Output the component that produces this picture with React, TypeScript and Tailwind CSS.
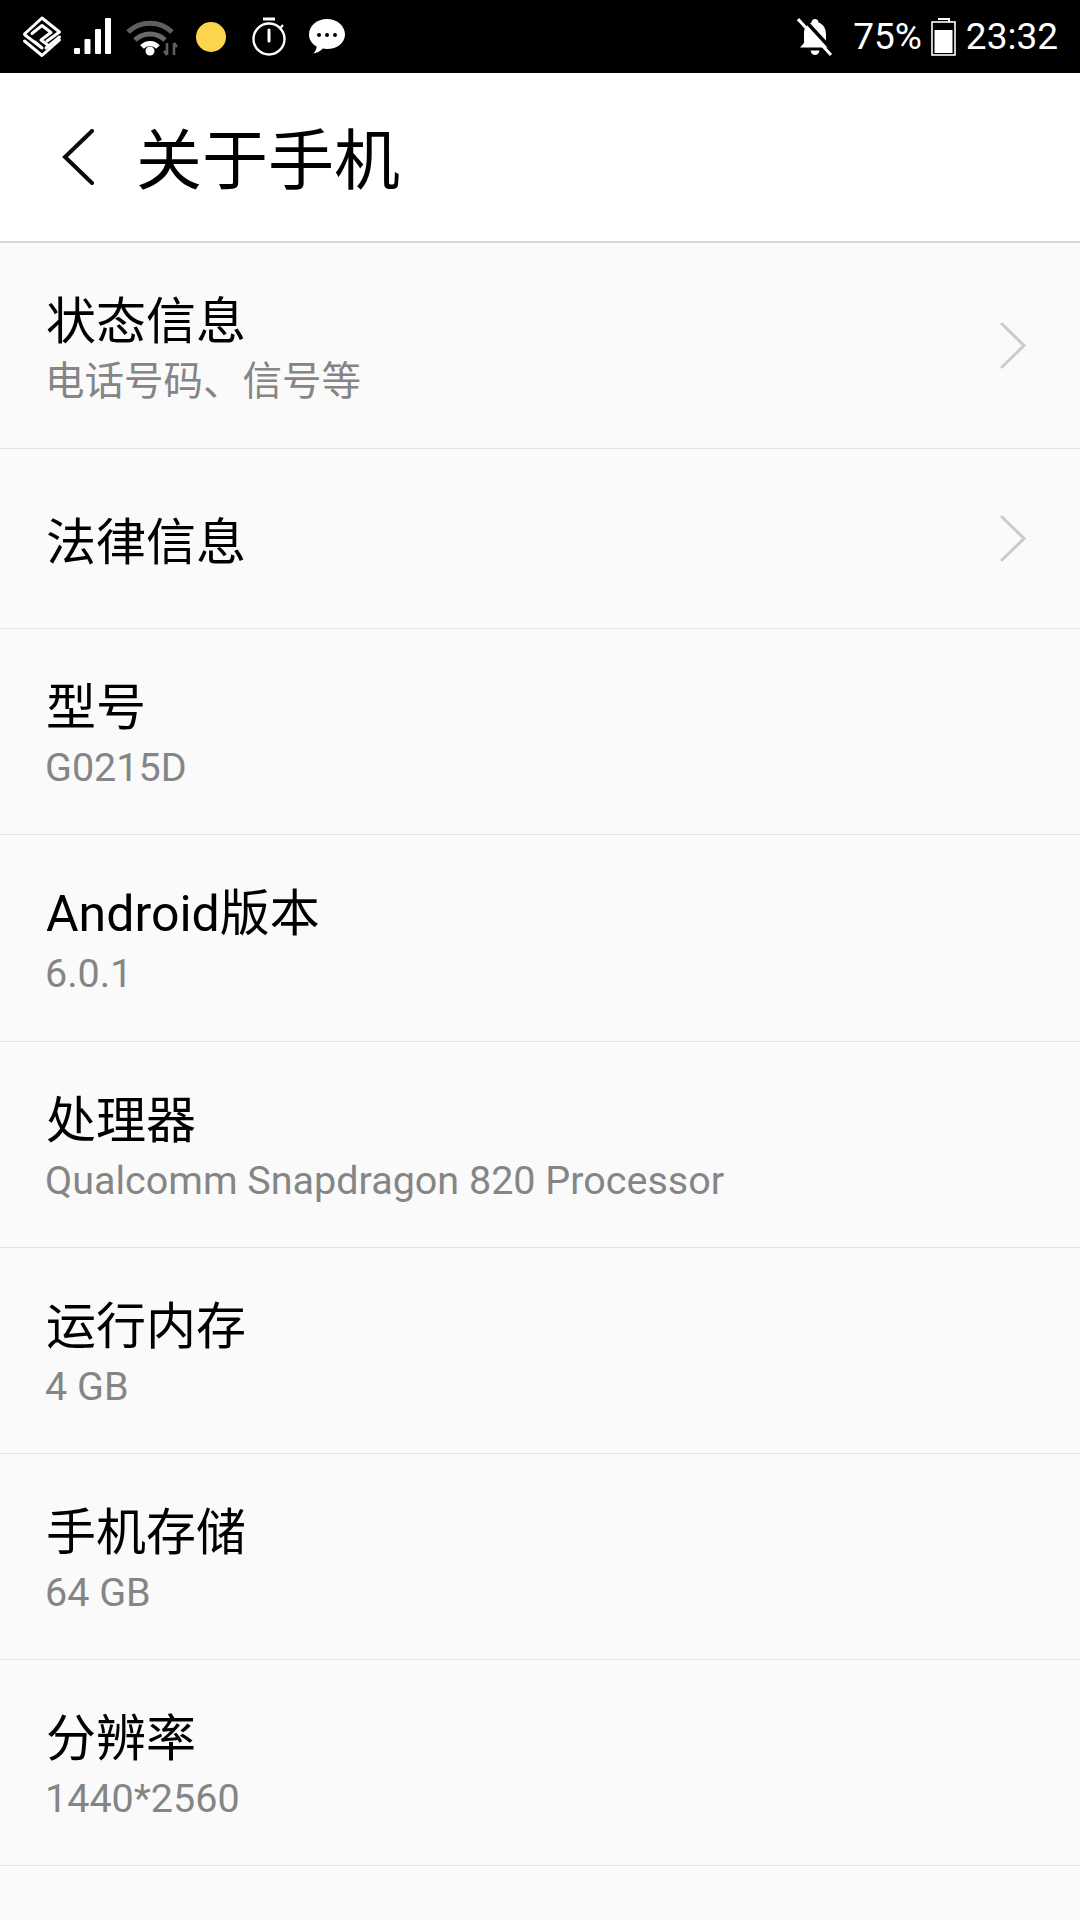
const CJK = "font-['Roboto','Noto_Sans_CJK_SC',sans-serif]"

function SignalIcon() {
  return (
    <svg width="38" height="38" viewBox="0 0 38 38" fill="#fff">
      <rect x="0" y="30" width="6" height="6" rx="1" />
      <rect x="10.5" y="21" width="6" height="15" rx="1" />
      <rect x="21" y="11" width="6" height="25" rx="1" />
      <rect x="31" y="0" width="6" height="36" rx="1" />
    </svg>
  )
}

function CarrierIcon() {
  return (
    <svg width="40" height="42" viewBox="0 0 40 42" fill="none" stroke="#fff" strokeWidth="3" strokeLinejoin="round" strokeLinecap="round">
      <path d="M2.5 18 L20 2 L37.5 16 L25 25" />
      <path d="M10 17.5 L20 9.5 L29 16.5 L19 24 L27 30" />
      <path d="M3 19 L20 32 L13 26" />
      <path d="M2.5 25 L20 39.5 L37.5 24" />
      <path d="M24 32 L37.5 21" />
    </svg>
  )
}

function WifiIcon() {
  return (
    <svg width="52" height="38" viewBox="0 0 52 38" fill="none">
      <path d="M2 14 A 32 32 0 0 1 46 14" stroke="#5f5f5f" strokeWidth="5" />
      <path d="M9 22 A 22 22 0 0 1 39 22" stroke="#6a6a6a" strokeWidth="5" />
      <path d="M16 29 A 11 11 0 0 1 32 29" stroke="#fff" strokeWidth="5" />
      <circle cx="24" cy="33" r="4.5" fill="#fff" />
      <path d="M41 25 V37 M38 33 L41 37 M48 37 V25 M48 25 L51 29" stroke="#5f5f5f" strokeWidth="2.6" />
    </svg>
  )
}

function TimerIcon() {
  return (
    <svg width="36" height="40" viewBox="0 0 36 40" fill="none" stroke="#fff">
      <circle cx="18" cy="22" r="15.5" strokeWidth="2.4" />
      <path d="M12 2 H24" strokeWidth="3" />
      <path d="M32 8 L29.5 11" strokeWidth="2.2" />
      <path d="M18 13 V24" strokeWidth="3" strokeLinecap="round" />
    </svg>
  )
}

function ChatIcon() {
  return (
    <svg width="36" height="35" viewBox="0 0 36 35" fill="#fff">
      <path d="M18 0 C28 0 36 6.8 36 15.5 C36 24 28 30 18 30 C16.5 30 15 29.8 13.8 29.6 C11.5 32 8.5 34 4.5 34.5 C6.5 32.5 7.6 29.8 7.6 27.6 C3 25 0 20.6 0 15.5 C0 6.8 8 0 18 0 Z" />
      <circle cx="10" cy="16" r="2" fill="#000" />
      <circle cx="18" cy="16" r="2" fill="#000" />
      <circle cx="26" cy="16" r="2" fill="#000" />
    </svg>
  )
}

function MutedBellIcon() {
  return (
    <svg width="36" height="40" viewBox="0 0 36 40" fill="none">
      <path d="M18 2 C20 2 21.5 3.5 21.5 5.5 C27 7.5 29 12 29 18 V26 L33 30.5 H3 L7 26 V16 C7 11 10 7.5 14.5 5.5 C14.5 3.5 16 2 18 2 Z" fill="#fff" />
      <path d="M13.5 33.5 H22.5 C22 36.5 20 38 18 38 C16 38 14 36.5 13.5 33.5 Z" fill="#fff" />
      <path d="M4 -1 L37 35" stroke="#000" strokeWidth="3.5" />
      <path d="M1 2 L34 38" stroke="#fff" strokeWidth="3" />
    </svg>
  )
}

function BatteryIcon() {
  return (
    <svg width="25" height="38" viewBox="0 0 25 38" fill="none">
      <path d="M7 1 H18 V4" stroke="#fff" strokeWidth="2" />
      <rect x="1" y="4" width="23" height="33" stroke="#fff" strokeWidth="1.6" />
      <rect x="3.5" y="12" width="18" height="23" fill="#fff" />
    </svg>
  )
}

function ChevronRight() {
  return (
    <svg width="26" height="48" viewBox="0 0 26 48" fill="none" stroke="#cbcbcb" strokeWidth="3" strokeLinecap="round">
      <path d="M2 2 L24 23.5 L2 45" />
    </svg>
  )
}

function Row({ title, sub, arrow }: { title: string; sub?: string; arrow?: boolean }) {
  return (
    <div className={`flex items-center justify-between pl-[46px] pr-[54px] border-b border-[#e2e2e2] ${sub ? 'h-[206.2px]' : 'h-[180px]'}`}>
      <div className="flex flex-col pt-[8px]">
        <div className="text-[50px] leading-[60px] text-black">{title}</div>
        {sub && <div className="mt-[5px] text-[39.5px] leading-[50px] text-[#858585] -ml-px">{sub}</div>}
      </div>
      {arrow && <ChevronRight />}
    </div>
  )
}

export default function App() {
  return (
    <div className={`w-[1080px] h-[1920px] overflow-hidden bg-[#fafafa] flex flex-col ${CJK}`}>
      {/* Status bar */}
      <div className="h-[73px] bg-black flex items-center justify-between pl-[22px] pr-[22px] text-white shrink-0">
        <div className="flex items-center">
          <CarrierIcon />
          <div className="ml-[12px]"><SignalIcon /></div>
          <div className="ml-[14px]"><WifiIcon /></div>
          <div className="ml-[18px] w-[30px] h-[30px] rounded-full bg-[#fdd54d]" />
          <div className="ml-[25px]"><TimerIcon /></div>
          <div className="ml-[22px]"><ChatIcon /></div>
        </div>
        <div className="flex items-center">
          <MutedBellIcon />
          <span className="ml-[20px] text-[37px] font-normal leading-none">75%</span>
          <div className="ml-[9px]"><BatteryIcon /></div>
          <span className="ml-[10px] text-[37px] font-normal leading-none">23:32</span>
        </div>
      </div>

      {/* Header */}
      <div className="h-[170px] bg-white border-b-2 border-[#d6d6d6] flex items-center pl-[62px] pt-[6px] shrink-0">
        <svg className="mb-[6px]" width="32" height="56" viewBox="0 0 32 56" fill="none" stroke="#0a0a0a" strokeWidth="4" strokeLinecap="round">
          <path d="M30 2 L3 28 L30 54" />
        </svg>
        <div className="ml-[42px] pt-[3px] text-[66px] leading-none text-black">关于手机</div>
      </div>

      {/* Rows */}
      <div className="flex flex-col">
        <Row title="状态信息" sub="电话号码、信号等" arrow />
        <Row title="法律信息" arrow />
        <Row title="型号" sub="G0215D" />
        <Row title="Android版本" sub="6.0.1" />
        <Row title="处理器" sub="Qualcomm Snapdragon 820 Processor" />
        <Row title="运行内存" sub="4 GB" />
        <Row title="手机存储" sub="64 GB" />
        <Row title="分辨率" sub="1440*2560" />
      </div>
    </div>
  )
}
